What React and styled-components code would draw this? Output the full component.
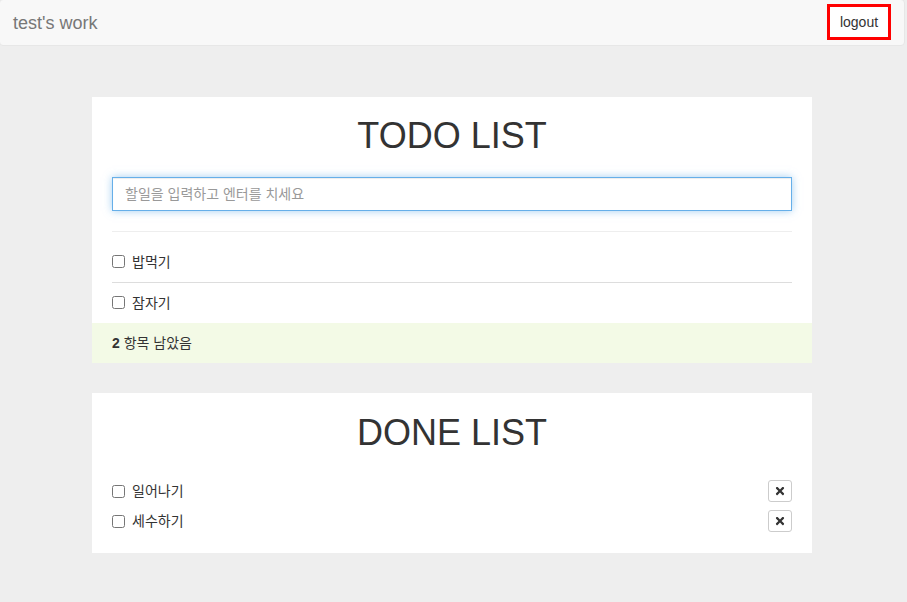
import React from "react";
import styled, { createGlobalStyle } from "styled-components";
import { FaTimes } from "react-icons/fa";

const GlobalStyle = createGlobalStyle`
  html, body {
    margin: 0;
    padding: 0;
    background: #eeeeee;
  }
  body {
    font-family: "Liberation Sans", "Noto Sans CJK KR", sans-serif;
    font-size: 14px;
    color: #333;
    overflow: hidden;
  }
  * { box-sizing: border-box; }
`;

const Page = styled.div`
  min-height: 602px;
`;

const Navbar = styled.nav`
  display: flex;
  align-items: center;
  justify-content: space-between;
  height: 47px;
  margin: -1px 2px 0 -1px;
  background: #f8f8f8;
  border: 1px solid #e7e7e7;
  border-radius: 4px;
`;

const Brand = styled.span`
  padding-left: 13px;
  font-size: 18px;
  line-height: 20px;
  color: #777;
`;

const LogoutButton = styled.button`
  height: 36px;
  width: 64px;
  margin-right: 13px;
  margin-top: -1px;
  padding: 0;
  border: 3px solid #ff0000;
  background: #fff;
  font-family: inherit;
  font-size: 14px;
  color: #333;
  cursor: pointer;
`;

const Main = styled.main`
  display: flex;
  flex-direction: column;
  align-items: center;
  gap: 30px;
  padding: 51px 0 0 0;
`;

const Card = styled.section`
  width: 720px;
  margin-left: -3px;
  background: #fff;
  padding: 0 20px ${(p) => (p.$bottom ? p.$bottom : 0)}px;
  display: flex;
  flex-direction: column;
`;

const Title = styled.h1`
  margin: ${(p) => p.$top}px 0 0;
  font-size: 36px;
  line-height: 1.1;
  font-weight: 400;
  text-align: center;
  color: #333;
`;

const TodoInput = styled.input`
  margin-top: 21px;
  height: 34px;
  width: 100%;
  padding: 6px 12px;
  font-family: inherit;
  font-size: 14px;
  color: #555;
  border: 1px solid #66afe9;
  outline: none;
  box-shadow: inset 0 1px 1px rgba(0, 0, 0, 0.075), 0 0 8px rgba(102, 175, 233, 0.6);
  &::placeholder {
    color: #999;
  }
`;

const Divider = styled.hr`
  margin: 20px 0 0;
  border: 0;
  border-top: 1px solid #eee;
`;

const TodoItems = styled.ul`
  list-style: none;
  margin: 10px 0 0;
  padding: 0;
`;

const TodoItem = styled.li`
  display: flex;
  align-items: center;
  gap: 7px;
  padding: 10px 0;
  line-height: 20px;
  border-bottom: 1px solid #ddd;
  &:last-child {
    border-bottom: 0;
  }
`;

const Check = styled.input.attrs({ type: "checkbox" })`
  width: 13px;
  height: 13px;
  margin: 0;
`;

const Footer = styled.div`
  margin: 0 -20px;
  padding: 10px 20px;
  line-height: 20px;
  background: #f3fae6;
`;

const DoneItems = styled.ul`
  list-style: none;
  margin: 24px 0 0;
  padding: 0;
`;

const DoneItem = styled.li`
  display: flex;
  align-items: center;
  justify-content: space-between;
  height: 30px;
`;

const Label = styled.label`
  display: flex;
  align-items: center;
  gap: 7px;
  line-height: 20px;
`;

const RemoveButton = styled.button`
  width: 24px;
  height: 22px;
  padding: 0;
  display: flex;
  align-items: center;
  justify-content: center;
  background: #fff;
  border: 1px solid #ccc;
  border-radius: 3px;
  color: #333;
  cursor: pointer;
`;

const todos = ["밥먹기", "잠자기"];
const dones = ["일어나기", "세수하기"];

export default function App() {
  return (
    <Page>
      <GlobalStyle />
      <Navbar>
        <Brand>test's work</Brand>
        <LogoutButton>logout</LogoutButton>
      </Navbar>
      <Main>
        <Card>
          <Title $top={19}>TODO LIST</Title>
          <TodoInput placeholder="할일을 입력하고 엔터를 치세요" />
          <Divider />
          <TodoItems>
            {todos.map((t) => (
              <TodoItem key={t}>
                <Check />
                <span>{t}</span>
              </TodoItem>
            ))}
          </TodoItems>
          <Footer>
            <strong>2</strong> 항목 남았음
          </Footer>
        </Card>
        <Card $bottom={17}>
          <Title $top={20}>DONE LIST</Title>
          <DoneItems>
            {dones.map((t) => (
              <DoneItem key={t}>
                <Label>
                  <Check />
                  <span>{t}</span>
                </Label>
                <RemoveButton aria-label="remove">
                  <FaTimes size={12} />
                </RemoveButton>
              </DoneItem>
            ))}
          </DoneItems>
        </Card>
      </Main>
    </Page>
  );
}
